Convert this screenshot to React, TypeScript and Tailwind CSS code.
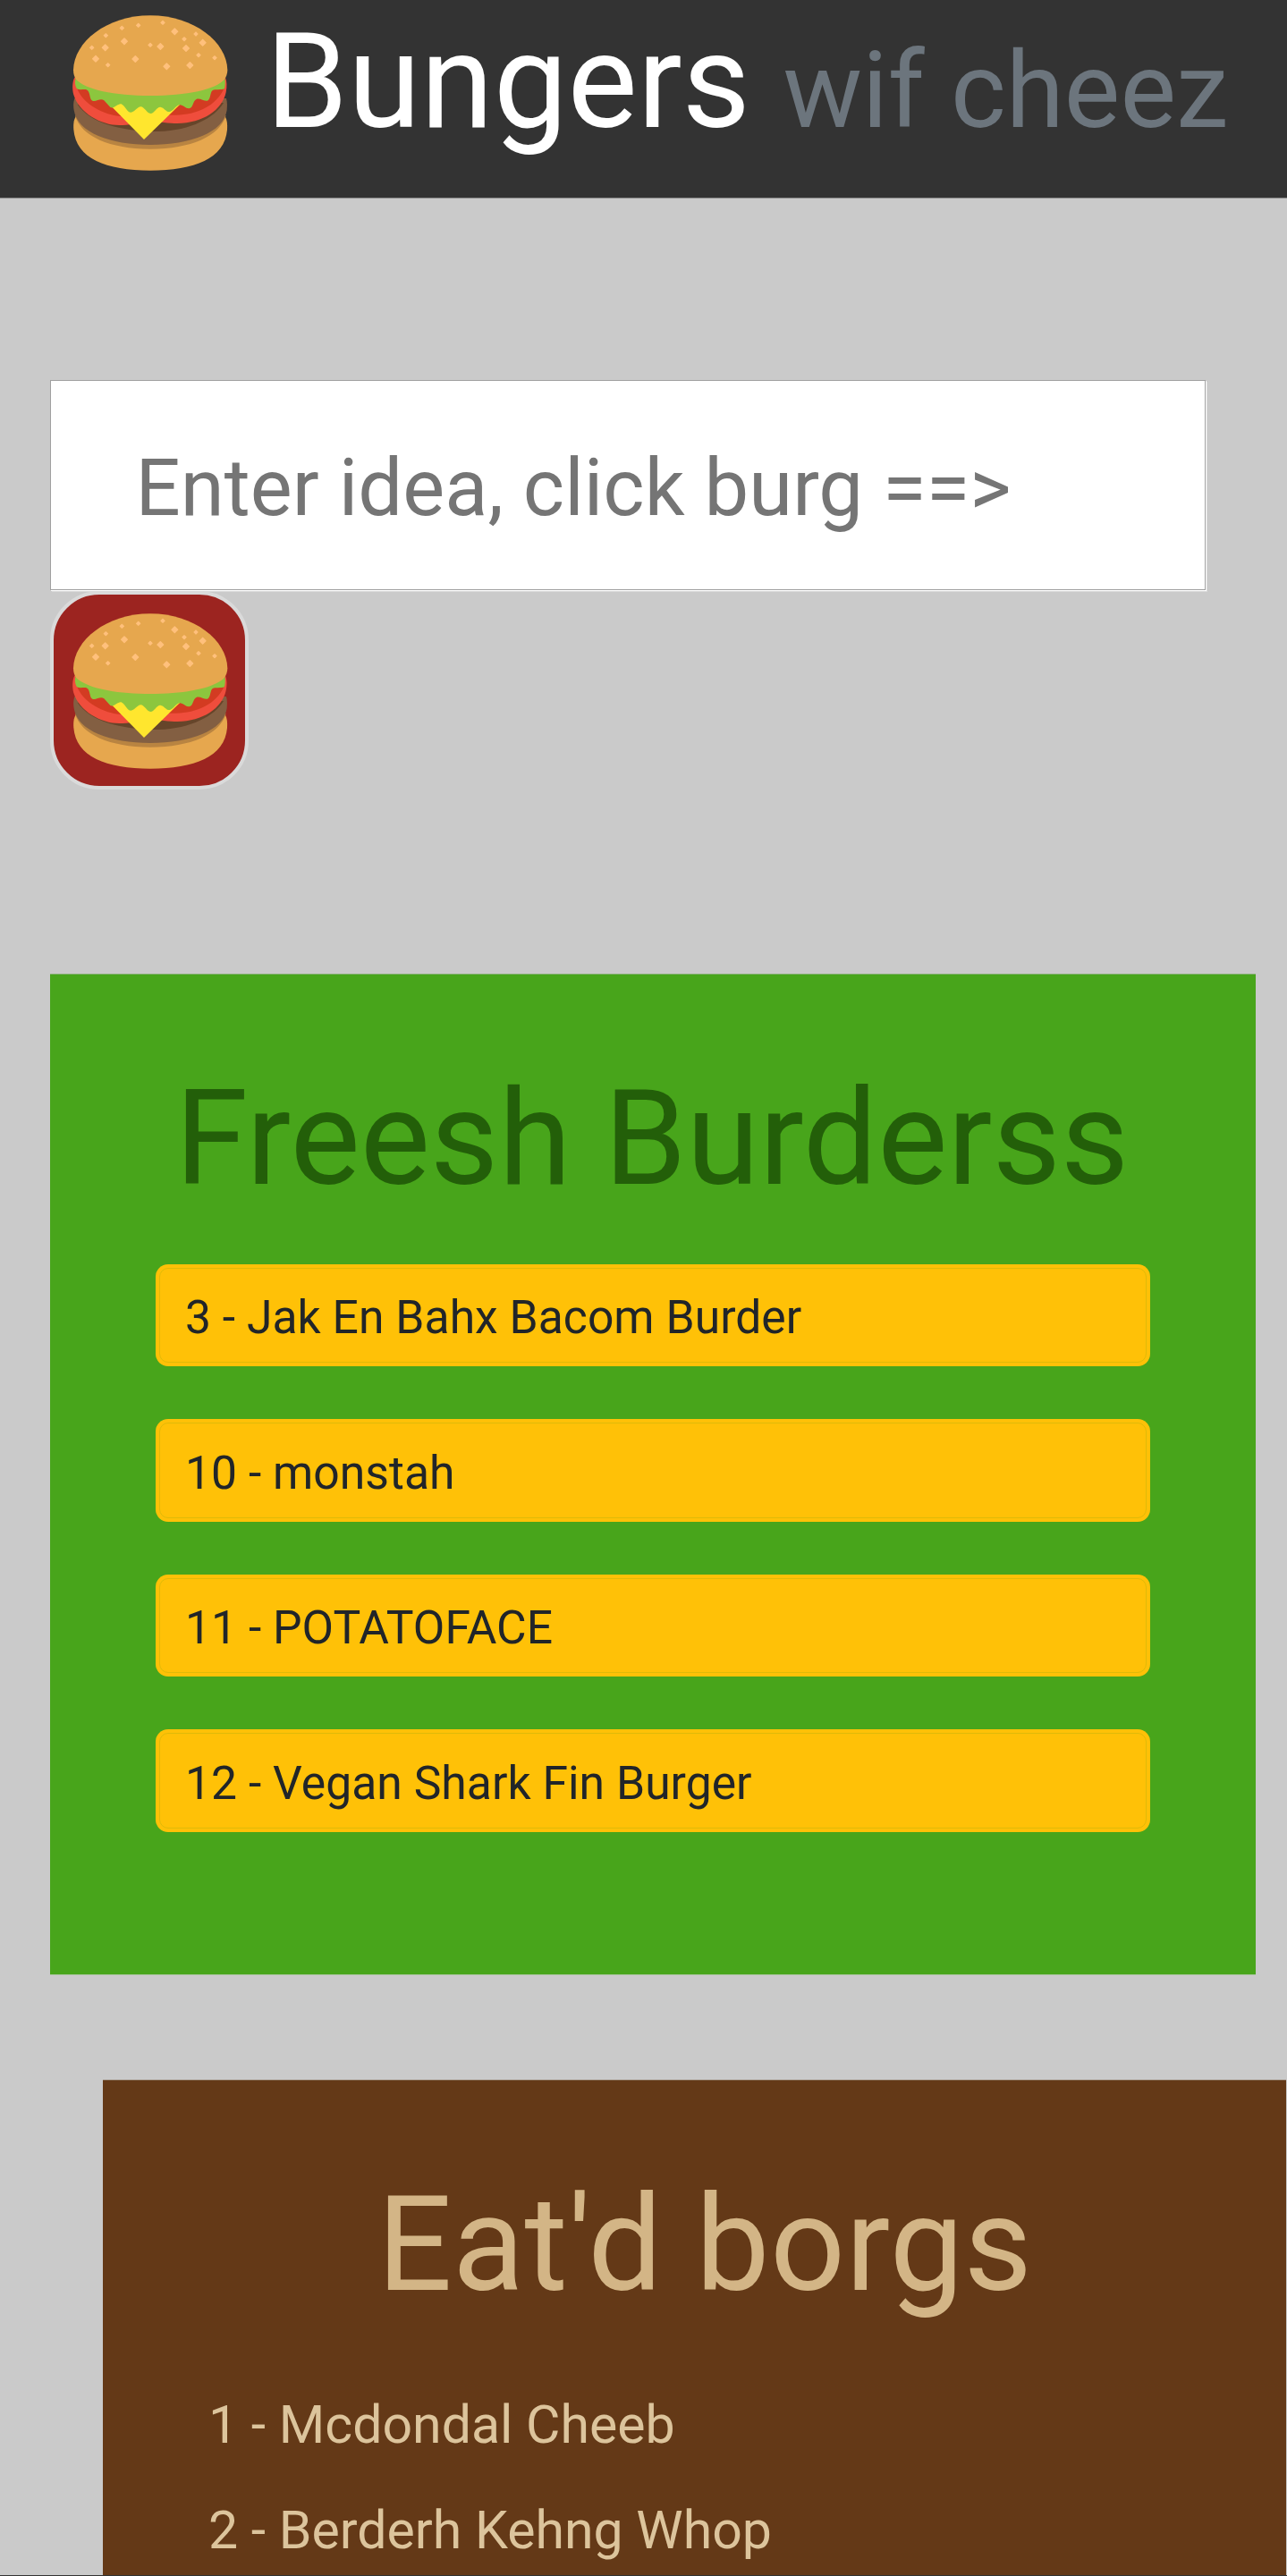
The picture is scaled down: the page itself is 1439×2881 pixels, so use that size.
import React from "react";

const SEEDS: [number, number, number][] = [
  [229, 94, 8], [284, 85, 8], [366, 76, 8], [175, 119, 8], [128, 160, 8], [182, 218, 8],
  [324, 151, 8], [438, 131, 8], [477, 114, 8], [486, 185, 8], [540, 194, 8],
  [237, 139, 12], [173, 160, 12], [141, 197, 12], [274, 198, 12], [358, 156, 12],
  [406, 106, 12], [500, 143, 12], [444, 162, 12], [457, 219, 12], [379, 223, 12],
];

function Burger({ className = "" }: { className?: string }) {
  return (
    <svg viewBox="60 48 528 528" className={className} aria-hidden="true">
      <path fill="#e6a74e" d="M75 390C66 403 66 420 67 435C75 532 176 572 324 572S574 532 582 435C583 417 582 402 575 390Z" />
      <path fill="#b98441" d="M72 388C92 458 188 500 324 500S556 458 578 388Z" />
      <path fill="#835f42" d="M70 330C65 345 66 358 68 370C80 446 190 486 324 486S570 446 581 370C582 355 583 345 579 330Z" />
      <path fill="#66452a" d="M80 350C120 410 220 441 352 441C460 438 540 395 570 345Z" />
      <path fill="#ef4d3c" d="M70 260C62 275 62 300 67 318C86 380 160 420 220 420C250 420 290 414 320 402C350 410 390 414 415 414C500 413 565 370 578 310C582 290 581 272 576 260Z" />
      <path fill="#d33b22" d="M79 298C100 350 165 386 230 391L280 386H410C480 386 545 355 571 298Z" />
      <path fill="#ffe62e" d="M160 333C168 330 172 334 176 339L303 468L424 350C400 344 250 330 160 333Z" />
      <path fill="#8cc63e" d="M75 258C70 272 71 284 76 295C80 305 104 297 112 302C124 309 119 333 130 338C142 343 156 328 169 337L190 360C204 367 216 344 229 350C240 356 247 377 259 377C272 376 281 358 292 358C304 358 313 381 325 381C337 381 346 358 358 359C371 361 377 377 390 375C402 371 413 352 423 352C435 352 443 365 454 364C469 362 466 337 480 332C494 329 509 343 518 337C528 328 524 307 535 302C549 299 569 302 573 297C576 284 576 270 573 258Z" />
      <path fill="#e6a74e" d="M324 52C176 52 68 142 66 235C66 248 69 258 75 266C106 300 202 321 324 321S544 300 573 266C579 258 583 248 583 235C581 142 472 52 324 52Z" />
      {SEEDS.map(([x, y, r]) => (
        <rect key={`${x}-${y}`} fill="#ffc07c" x={x - r * 0.76} y={y - r * 0.76} width={r * 1.52} height={r * 1.52} rx={r * 0.18} transform={`rotate(45 ${x} ${y})`} />
      ))}
    </svg>
  );
}

const FRESH = ["3 - Jak En Bahx Bacom Burder", "10 - monstah", "11 - POTATOFACE", "12 - Vegan Shark Fin Burger"];
const EATEN = ["1 - Mcdondal Cheeb", "2 - Berderh Kehng Whop"];

export default function App() {
  return (
    <div className="flex h-[2881px] w-full flex-col overflow-hidden border-b border-[#333333] bg-[#cacaca] font-['Roboto',sans-serif] text-[#212529]">
      <header className="flex h-[222px] shrink-0 items-start border-b border-[#8a8a8a] bg-[#333333] pl-[80px]">
        <Burger className="mt-4 h-[176px] w-[176px] shrink-0" />
        <h1 className="mt-[3px] ml-[41px] text-[147.5px] leading-[177px] whitespace-nowrap text-white">
          Bungers <small className="text-[118px] text-[#6c757d]">wif cheez</small>
        </h1>
      </header>

      <form className="mt-[203px] flex h-[458px] shrink-0 flex-col items-start pl-[56px]" onSubmit={(e) => e.preventDefault()}>
        <input
          type="text"
          placeholder="Enter idea, click burg ==>"
          className="h-[235px] w-[1292px] shrink-0 border border-[#a0a0a0] bg-white pt-[7px] pl-[94.5px] text-[88.5px] tracking-[0.04px] shadow-[1px_1px_0_#ffffff,2px_2px_0_#dadada] outline-none placeholder:text-[#757575] placeholder:opacity-100"
        />
        <button
          type="button"
          aria-label="Add burger"
          className="mt-px flex h-[222px] w-[222px] shrink-0 items-start rounded-[55px] border-[4px] border-[#dadada] bg-[#9c2420] pt-[20px] pl-[20px]"
        >
          <Burger className="h-[176px] w-[176px]" />
        </button>
      </form>

      <section className="mt-[206px] ml-[56px] h-[1120px] w-[1348px] shrink-0 border-t border-b border-t-[#80ae6b] border-b-[#a0c390] bg-[#48a51b] px-[118px] pt-[95px]">
        <h1 className="mr-[2px] text-center text-[147.5px] leading-[177px] tracking-[0.15px] whitespace-nowrap text-[#235f09]">Freesh Burderss</h1>
        <ul className="mt-[52px] flex flex-col gap-[59px]">
          {FRESH.map((name) => (
            <li key={name} className="h-[114.4px] rounded-[14px] bg-[#ffc107] p-[4px]">
              <div className="flex h-full items-center rounded-[10px] border border-[#dfba09] pt-[5.5px] pl-[28px] text-[51.625px] leading-[77px] tracking-[0.03px] whitespace-nowrap">
                {name}
              </div>
            </li>
          ))}
        </ul>
      </section>

      <section className="mt-[117px] mr-px ml-[115px] h-[900px] shrink-0 border-t border-[#7f6248] bg-[#643917] px-[118px] pt-[95px]">
        <h1 className="ml-[23px] text-center text-[147.5px] leading-[177px] tracking-[0.4px] whitespace-nowrap text-[#d3b586]">Eat&apos;d borgs</h1>
        <ul className="mt-[68px] text-[59px] text-[#dcc49c]">
          {EATEN.map((name) => (
            <li key={name} className="mb-[29px] h-[89px] leading-[89px] whitespace-nowrap">{name}</li>
          ))}
        </ul>
      </section>
    </div>
  );
}
